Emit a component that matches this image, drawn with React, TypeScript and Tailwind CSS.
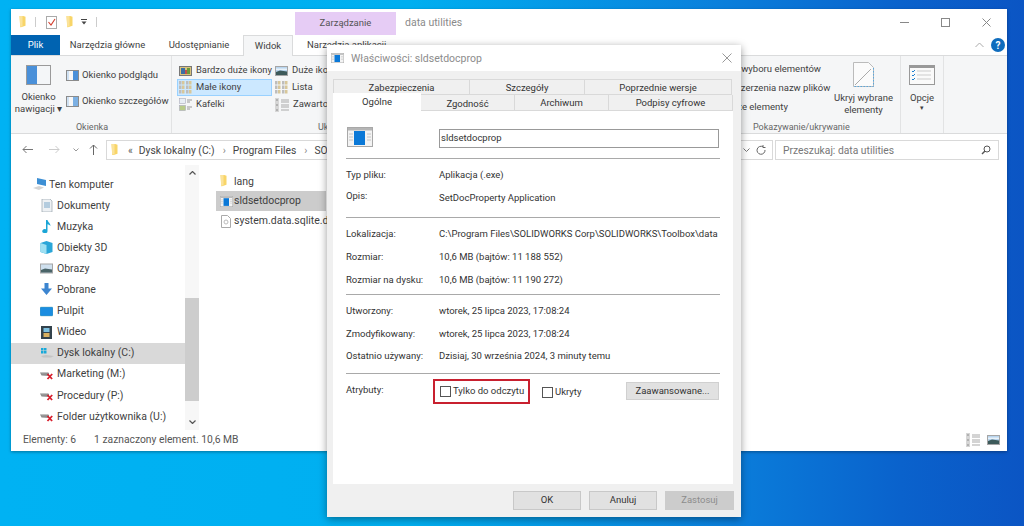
import React from "react";

const Folder = ({ s = 12 }: { s?: number }) => (
  <svg width={s} height={s * 1.25} viewBox="0 0 12 15" className="shrink-0">
    <path d="M2 0h5l3 1v12l-6 2H3z" fill="#f8d568" />
    <path d="M2 0h4v14H3z" fill="#fbe39a" />
  </svg>
);

const AppIcon = ({ w = 16, h = 12 }: { w?: number; h?: number }) => (
  <svg width={w} height={h} viewBox="0 0 26 20" preserveAspectRatio="none" className="shrink-0">
    <rect x="0.5" y="0.5" width="25" height="19" fill="#f3f3f3" stroke="#a8a8a8" />
    <rect x="1" y="1" width="24" height="2.5" fill="#b5b5b5" />
    <rect x="7" y="4" width="11" height="14" fill="#0a78d7" />
    <path d="M2 7h4M2 10h4M2 13h4M20 7h4M20 10h4M20 13h4" stroke="#c4c4c4" />
  </svg>
);

const PaneIcon = ({ fill = "#4a90d9" }: { fill?: string }) => (
  <svg width="13" height="11" viewBox="0 0 13 11" className="shrink-0">
    <rect x="0.5" y="0.5" width="12" height="10" fill="#f7f7f7" stroke="#8b8b8b" />
    <rect x="7" y="1" width="5" height="9" fill={fill} />
    <rect x="1" y="1" width="2" height="9" fill="#cfe1f3" />
  </svg>
);

const GridIcon = () => (
  <svg width="13" height="13" viewBox="0 0 13 13" className="shrink-0">
    {[0, 4.5, 9].map((y) => [0, 7].map((x) => (
      <g key={`${x}-${y}`}>
        <rect x={x} y={y} width="2.5" height="3.5" fill="#bdbdbd" />
        <rect x={x + 3} y={y} width="2.5" height="3.5" fill="#d8c79a" />
      </g>
    )))}
  </svg>
);

const TileIcon = () => (
  <svg width="13" height="13" viewBox="0 0 13 13" className="shrink-0">
    <rect x="0.5" y="0.5" width="6" height="5" fill="#e8eef4" stroke="#aab" strokeWidth=".6" />
    <rect x="0.5" y="7.5" width="6" height="5" fill="#b9cc8a" stroke="#aab" strokeWidth=".6" />
    <path d="M8 2h5M8 4h3M8 9h5M8 11h3" stroke="#999" />
  </svg>
);

const ListIcon = () => (
  <svg width="14" height="14" viewBox="0 0 14 14" className="shrink-0">
    <rect x="0" y="0" width="4" height="14" fill="#d6d6d6" />
    <path d="M1.5 2h1M1.5 7h1M1.5 12h1" stroke="#444" />
    <path d="M6 2h8M6 4h8M6 7h8M6 9h8M6 12h8" stroke="#a9a9a9" />
  </svg>
);

const LandscapeIcon = ({ w = 13, h = 10 }: { w?: number; h?: number }) => (
  <svg width={w} height={h} viewBox="0 0 13 10" className="shrink-0">
    <rect x="0.5" y="0.5" width="12" height="9" fill="#b9d5ee" stroke="#a5a5a5" />
    <path d="M1 6l4-1.5 7 1V9H1z" fill="#3d5a5a" />
    <rect x="1" y="2.5" width="11" height="1.5" fill="#e8f2fa" />
  </svg>
);

const PhotoIcon = () => (
  <svg width="13" height="10" viewBox="0 0 13 10" className="shrink-0">
    <rect x="0.5" y="0.5" width="12" height="9" fill="#d9c27a" stroke="#777" />
    <rect x="2" y="2" width="4" height="6" fill="#3a6ea5" />
    <rect x="6" y="4" width="2" height="4" fill="#c0504d" />
    <rect x="8" y="2" width="3" height="6" fill="#6a9a3a" />
  </svg>
);

const Drive = ({ err = false }: { err?: boolean }) => (
  <svg width="14" height="11" viewBox="0 0 14 11" className="shrink-0">
    {err ? (
      <>
        <path d="M0 3.5l7-.5 2 1v3L1.5 6.5z" fill="#8e8e8e" />
        <path d="M0 3.5l7-.5 2 1-7 .3z" fill="#c9c9c9" />
        <path d="M7.5 5l4.6 5M12.2 5l-4.700 5" stroke="#d81e2c" strokeWidth="1.8" />
      </>
    ) : (
      <>
        <path d="M1 8l5-1 8 1-3 1.5H3z" fill="#c4c4c4" />
        <path d="M1 0h2.5v2.5H1zM4 0h2.5v2.5H4zM1 3h2.5v2.5H1zM4 3h2.5v2.5H4z" fill="#18a9d9" />
      </>
    )}
  </svg>
);

const NavGlyph = ({ kind }: { kind: string }) => {
  const m: Record<string, React.ReactNode> = {
    pc: <><path d="M4 0l9 2v6L4 6z" fill="#3d8fd4" /><path d="M0 10l6-2 5 1.5-5 2.5z" fill="#d4d4d4" /></>,
    doc: <><path d="M2 0h8l2 2v11H2z" fill="#eef1f4" stroke="#9aa5ae" strokeWidth=".7" /><path d="M4 4h6M4 6h6M4 8h6" stroke="#7ba7c9" /></>,
    music: <path d="M6 0h1.5c.5 2.5 3 3 3 6-1-1.2-2-1.6-3-1.8V11a2.6 2 0 1 1-1.5-1.7z" fill="#1aa5d6" />,
    cube: <><path d="M6.5 0l6 2v9l-6 2-6-2V2z" fill="#2aa6d8" /><path d="M.5 2l6 2v9l-6-2z" fill="#9fe0f2" /></>,
    pic: <><rect x="0.5" y="2" width="12" height="9" fill="#cfe0ee" stroke="#a5a5a5" /><path d="M1 8l4-1.5 7 1v3H1z" fill="#4a6468" /></>,
    down: <path d="M4.5 0h4v5.5H12L6.5 12 1 5.5h3.5z" fill="#3c85d0" />,
    desk: <rect x="0" y="2" width="13" height="9" rx="1" fill="#1b8de0" stroke="#6aa" strokeWidth=".4" />,
    video: <><rect x="1" y="0" width="11" height="13" fill="#33424c" /><rect x="3.5" y="2" width="6" height="4" fill="#7dc0e0" /><rect x="3.5" y="7" width="6" height="4" fill="#d9b060" /></>,
  };
  return <svg width="13" height="13" viewBox="0 0 13 13" className="shrink-0">{m[kind]}</svg>;
};

const RibbonItem = ({ icon, label, className = "" }: { icon: React.ReactNode; label: string; className?: string }) => (
  <div className={`flex h-[17px] items-center gap-[4px] whitespace-nowrap pl-[2px] ${className}`}>
    {icon}
    <span>{label}</span>
  </div>
);

const Sep = () => <div className="mx-[13px] h-px shrink-0 bg-[#a9a9a9]" />;

const Row = ({ label, value, h = 23, raise = false }: { label: string; value: string; h?: number; raise?: boolean }) => (
  <div className="flex shrink-0 items-center px-[13px]" style={{ height: h }}>
    <div className={`w-[93px] shrink-0 whitespace-nowrap ${raise ? "-mt-[5px]" : ""}`}>{label}</div>
    <div className="min-w-0 flex-1 whitespace-nowrap">{value}</div>
  </div>
);

const Chk = () => <span className="block h-[11px] w-[11px] shrink-0 border border-[#555] bg-white" />;

const NAV: [string, string][] = [
  ["doc", "Dokumenty"], ["music", "Muzyka"], ["cube", "Obiekty 3D"], ["pic", "Obrazy"],
  ["down", "Pobrane"], ["desk", "Pulpit"], ["video", "Wideo"],
];

export default function App() {
  return (
    <div
      className="relative h-[526px] w-[1024px] overflow-hidden bg-[linear-gradient(90deg,#00b2f3_0%,#00aff0_40%,#0a80dc_70%,#0a62cc_88%,#0b55c4_100%)] text-[#3f3f3f]"
      style={{ fontFamily: "Roboto, sans-serif" }}
    >
      {/* Explorer */}
      <div className="absolute left-[11px] top-[9px] flex h-[442px] w-[996px] flex-col bg-white text-[9.5px] shadow-[0_1px_3px_rgba(0,0,0,0.35)]">
        {/* title row */}
        <div className="flex h-[26px] shrink-0 items-center">
          <div className="flex w-[284px] items-center pl-[7px]">
            <Folder s={9} />
            <div className="ml-[8px] h-[10px] w-px bg-[#ccc]" />
            <svg width="11" height="13" viewBox="0 0 11 13" className="ml-[10px]">
              <rect x=".5" y=".5" width="10" height="12" fill="#fff" stroke="#aaa" />
              <path d="M2.5 6l2.5 3 4-6" fill="none" stroke="#d33c2c" strokeWidth="1.1" />
            </svg>
            <div className="ml-[8px]"><Folder s={9} /></div>
            <svg width="6" height="6" viewBox="0 0 6 6" className="ml-[7px]"><path d="M0 .5h6" stroke="#444" /><path d="M.5 2.5h5L3 5.5z" fill="#444" /></svg>
            <div className="ml-[9px] h-[10px] w-px bg-[#ccc]" />
          </div>
          <div className="mt-[3px] flex h-[23px] w-[101px] items-center justify-center bg-[#e6ccf5] text-[#555]">Zarządzanie</div>
          <div className="ml-[9px] pt-px text-[10.5px] text-[#8a8a8a]">data utilities</div>
          <div className="ml-auto flex items-center gap-[32px] pr-[16px]">
            <span className="block h-px w-[9px] bg-[#888]" />
            <span className="block h-[9px] w-[9px] border border-[#888]" />
            <svg width="9" height="9" viewBox="0 0 9 9"><path d="M.5.5l8 8M8.5.5l-8 8" stroke="#888" /></svg>
          </div>
        </div>
        {/* tabs row */}
        <div className="relative flex h-[20px] shrink-0 items-stretch">
          <div className="flex w-[49px] items-center justify-center bg-[#0063b1] text-white">Plik</div>
          <div className="flex w-[95px] items-center justify-center">Narzędzia główne</div>
          <div className="flex w-[88px] items-center justify-center">Udostępnianie</div>
          <div className="z-10 -mb-px flex w-[50px] items-center justify-center border-x border-t border-[#dadbdc] bg-[#f5f6f7]">Widok</div>
          <div className="flex w-[110px] items-center pl-[14px]">Narzędzia aplikacji</div>
          <div className="ml-auto flex items-center gap-[7px] pr-[2px]">
            <svg width="9" height="6" viewBox="0 0 9 6"><path d="M.5 5l4-4 4 4" fill="none" stroke="#aaa" /></svg>
            <span className="flex h-[14px] w-[14px] items-center justify-center rounded-full bg-[#0f6cbd] text-[10px] font-bold text-white">?</span>
          </div>
        </div>
        {/* ribbon */}
        <div className="flex h-[79px] shrink-0 border-y border-[#dadbdc] bg-[#f5f6f7]">
          <div className="flex w-[161px] shrink-0 flex-col border-r border-[#e2e3e4]">
            <div className="flex flex-1">
              <div className="flex w-[55px] flex-col items-center pt-[9px] text-center leading-[12px]">
                <svg width="25" height="20" viewBox="0 0 25 20">
                  <rect x=".5" y=".5" width="24" height="19" fill="#f4f6f8" stroke="#9a9a9a" />
                  <rect x="1" y="1" width="10" height="18" fill="#4a90d9" />
                </svg>
                <div className="mt-[6px]">Okienko</div>
                <div className="whitespace-nowrap">nawigacji ▾</div>
              </div>
              <div className="flex flex-col gap-[9px] pt-[11px]">
                <RibbonItem icon={<PaneIcon />} label="Okienko podglądu" className="!gap-[3px] !pl-0" />
                <RibbonItem icon={<PaneIcon fill="#7cb0e3" />} label="Okienko szczegółów" className="!gap-[3px] !pl-0" />
              </div>
            </div>
            <div className="-mb-px pl-[2px] text-center text-[9px] text-[#666]">Okienka</div>
          </div>
          <div className="flex w-[520px] shrink-0 flex-col border-r border-[#e2e3e4]">
            <div className="flex flex-1 pt-[6px]">
              <div className="ml-[5px] flex w-[98px] flex-col text-[9.4px]">
                <RibbonItem icon={<PhotoIcon />} label="Bardzo duże ikony" />
                <RibbonItem icon={<GridIcon />} label="Małe ikony" className="mr-[3px] border border-[#99d1ff] bg-[#cce8ff] !pl-[1px]" />
                <RibbonItem icon={<TileIcon />} label="Kafelki" />
              </div>
              <div className="flex flex-col">
                <RibbonItem icon={<LandscapeIcon />} label="Duże ikony" className="!pl-0" />
                <RibbonItem icon={<GridIcon />} label="Lista" className="!pl-0" />
                <RibbonItem icon={<ListIcon />} label="Zawartość" className="!pl-0" />
              </div>
            </div>
            <div className="-mb-px pl-[146px] text-[9px] text-[#666]">Układ</div>
          </div>
          <div className="flex w-[209px] shrink-0 flex-col border-r border-[#e2e3e4]">
            <div className="flex flex-1">
              <div className="ml-[28px] flex w-[112px] flex-col gap-[2px] whitespace-nowrap pt-[6px]">
                <div className="h-[17px]">Pola wyboru elementów</div>
                <div className="h-[17px]">Rozszerzenia nazw plików</div>
                <div className="h-[17px]">Ukryte elementy</div>
              </div>
              <div className="flex w-[63px] flex-col items-center pt-[6px] text-center leading-[12px]">
                <svg width="21" height="25" viewBox="0 0 21 25">
                  <path d="M.5.5h15l5 5v19H.5z" fill="#fbfbfb" stroke="#bbb" />
                  <path d="M20.5 6v18.5H1" fill="none" stroke="#5aa7dc" strokeDasharray="1.5 1.5" />
                  <path d="M2 23L18 7" stroke="#aaa" />
                </svg>
                <div className="mt-[5px] whitespace-nowrap">Ukryj wybrane</div>
                <div>elementy</div>
              </div>
            </div>
            <div className="-mb-px pl-[61px] text-[9px] text-[#666]">Pokazywanie/ukrywanie</div>
          </div>
          <div className="flex w-[43px] shrink-0 flex-col items-center border-r border-[#e2e3e4] pt-[9px]">
            <svg width="26" height="20" viewBox="0 0 26 20">
              <rect x=".5" y=".5" width="25" height="19" fill="#fafafa" stroke="#999" />
              <rect x="1" y="1" width="24" height="2" fill="#999" />
              <path d="M3 6l1 1 2-2M3 10l1 1 2-2M3 14l1 1 2-2" fill="none" stroke="#1d7fd0" />
              <path d="M8 6h14M8 10h14M8 14h14" stroke="#ccc" />
            </svg>
            <div className="mt-[6px]">Opcje</div>
            <div className="mt-[-2px] text-[7px] leading-[10px]">▾</div>
          </div>
        </div>
        {/* address row */}
        <div className="flex h-[31px] shrink-0 items-center">
          <div className="flex w-[95px] items-center pl-[11px] text-[#777]">
            <svg width="11" height="9" viewBox="0 0 11 9"><path d="M11 4.5H1M4.5 1L1 4.5 4.5 8" fill="none" stroke="#777" /></svg>
            <svg width="11" height="9" viewBox="0 0 11 9" className="ml-[16px]"><path d="M0 4.5h10M6.5 1L10 4.5 6.5 8" fill="none" stroke="#ccc" /></svg>
            <svg width="6" height="4" viewBox="0 0 6 4" className="ml-[13px]"><path d="M.5.5L3 3 5.5.5" fill="none" stroke="#999" /></svg>
            <svg width="9" height="11" viewBox="0 0 9 11" className="ml-[10px]"><path d="M4.5 11V1M1 4.5L4.5 1 8 4.5" fill="none" stroke="#666" /></svg>
          </div>
          <div className="flex h-[20px] w-[667px] items-center overflow-hidden border border-[#d9d9d9] pl-[3px] text-[10.3px]">
            <Folder s={9} />
            <span className="ml-[9px] whitespace-nowrap pt-[2px] text-[#555]">«</span>
            <span className="ml-[6px] whitespace-nowrap pt-[2px] text-[#444]">Dysk lokalny (C:)</span>
            <span className="ml-[8px] whitespace-nowrap pt-[2px] text-[#888]">›</span>
            <span className="ml-[7px] whitespace-nowrap pt-[2px] text-[#444]">Program Files</span>
            <span className="ml-[8px] whitespace-nowrap pt-[2px] text-[#888]">›</span>
            <span className="ml-[7px] whitespace-nowrap pt-[2px] text-[#444]">SOLIDWORKS Corp</span>
            <svg width="7" height="4" viewBox="0 0 7 4" className="ml-auto mr-[6px]"><path d="M.5.5l3 3 3-3" fill="none" stroke="#777" /></svg>
            <svg width="10" height="10" viewBox="0 0 10 10" className="mr-[6px]"><path d="M7 1.8A4 4 0 1 0 9 5M7 0v2.5h2.5" fill="none" stroke="#666" /></svg>
          </div>
          <div className="ml-[2px] flex h-[20px] w-[224px] items-center justify-between border border-[#d9d9d9] px-[7px] text-[10.3px] text-[#777]">
            <span className="pt-[2px]">Przeszukaj: data utilities</span>
            <svg width="10" height="10" viewBox="0 0 10 10"><circle cx="6" cy="4" r="3" fill="none" stroke="#555" /><path d="M4 6L1 9" stroke="#555" strokeWidth="1.4" /></svg>
          </div>
        </div>
        {/* main */}
        <div className="flex min-h-0 flex-1">
          <div className="w-[174px] shrink-0 pt-[9px] text-[10.5px]">
            <div className="flex h-[21px] items-center gap-[3px] pl-[22px]">
              <NavGlyph kind="pc" />
              <span>Ten komputer</span>
            </div>
            {NAV.map(([k, l]) => (
              <div key={l} className="flex h-[21.1px] items-center gap-[4px] pl-[29px]">
                <NavGlyph kind={k} />
                <span>{l}</span>
              </div>
            ))}
            <div className="flex h-[21.1px] items-center gap-[3px] bg-[#d9d9d9] pl-[29px]">
              <Drive />
              <span>Dysk lokalny (C:)</span>
            </div>
            {["Marketing (M:)", "Procedury (P:)", "Folder użytkownika (U:)"].map((l) => (
              <div key={l} className="flex h-[21.1px] items-center gap-[3px] pl-[29px]">
                <Drive err />
                <span className="whitespace-nowrap">{l}</span>
              </div>
            ))}
          </div>
          <div className="flex w-[14px] shrink-0 flex-col items-center bg-[#f7f7f7]">
            <svg width="7" height="4" viewBox="0 0 7 4" className="mt-[6px]"><path d="M.5 3.5l3-3 3 3" fill="none" stroke="#555" strokeWidth="1.2" /></svg>
            <div className="mt-[123px] h-[103px] w-full bg-[#cdcdcd]" />
            <svg width="7" height="4" viewBox="0 0 7 4" className="mt-[19px]"><path d="M.5.5l3 3 3-3" fill="none" stroke="#555" strokeWidth="1.2" /></svg>
          </div>
          <div className="min-w-0 flex-1 pl-[17px] pt-[6px] text-[10.5px]">
            <div className="flex h-[20px] items-center gap-[6px] pl-[3px]"><Folder s={9} /><span className="pt-px">lang</span></div>
            <div className="flex h-[20px] w-[110px] items-center gap-px bg-[#cccccc] pl-[4px]"><AppIcon w={13} h={11} /><span>sldsetdocprop</span></div>
            <div className="flex h-[20px] items-center gap-[3px] whitespace-nowrap pl-[5px]">
              <svg width="10" height="13" viewBox="0 0 10 13" className="shrink-0"><path d="M.5.5h6l3 3v9H.5z" fill="#fff" stroke="#aaa" /><circle cx="5" cy="7" r="2" fill="none" stroke="#bbb" /></svg>
              <span>system.data.sqlite.dll</span>
            </div>
          </div>
        </div>
        {/* status */}
        <div className="flex h-[21px] shrink-0 items-center pb-[2px] pl-[12px] pr-[7px] text-[10.3px] text-[#555]">
          <span>Elementy: 6</span>
          <span className="ml-[18px]">1 zaznaczony element. 10,6 MB</span>
          <div className="ml-auto flex items-center gap-[7px]">
            <ListIcon />
            <LandscapeIcon />
          </div>
        </div>
      </div>

      {/* Dialog */}
      <div className="absolute left-[327px] top-[45px] flex h-[472px] w-[414px] flex-col bg-[#f0f0f0] text-[9.5px] text-[#333] shadow-[0_2px_8px_rgba(0,0,0,0.4)]">
        <div className="flex h-[26px] shrink-0 items-center bg-white pl-[4px] pr-[9px]">
          <AppIcon w={13} h={10} />
          <span className="ml-[7px] pt-px text-[10.5px] text-[#8c8c8c]">Właściwości: sldsetdocprop</span>
          <svg width="10" height="10" viewBox="0 0 10 10" className="ml-auto"><path d="M.5.5l9 9M9.5.5l-9 9" stroke="#999" /></svg>
        </div>
        <div className="ml-[6px] mt-[8px] flex h-[16px] w-[399px] shrink-0 text-[#333]">
          <div className="flex w-[137px] items-center justify-center border border-[#d9d9d9] pt-[2px]">Zabezpieczenia</div>
          <div className="flex w-[115px] items-center justify-center border-y border-r border-[#d9d9d9] pt-[2px]">Szczegóły</div>
          <div className="flex flex-1 items-center justify-center border-y border-r border-[#d9d9d9] pt-[2px]">Poprzednie wersje</div>
        </div>
        <div className="relative ml-[6px] flex h-[16px] w-[400px] shrink-0">
          <div className="z-10 -mt-[2px] flex h-[19px] w-[88px] items-center justify-center bg-white">Ogólne</div>
          <div className="flex w-[94px] items-center justify-center border-b border-r border-[#d9d9d9] pt-[3px]">Zgodność</div>
          <div className="flex w-[94px] items-center justify-center border-b border-r border-[#d9d9d9] pt-[2px]">Archiwum</div>
          <div className="flex flex-1 items-center justify-center border-b border-r border-[#d9d9d9] pt-[2px]">Podpisy cyfrowe</div>
        </div>
        <div className="ml-[6px] flex h-[373px] w-[400px] shrink-0 flex-col bg-white">
          <div className="flex h-[47px] shrink-0 items-start px-[14px] pt-[16px]">
            <AppIcon w={26} h={20} />
            <div className="ml-[66px] mt-[2px] flex h-[19px] w-[280px] items-center border border-[#999] pl-[1px]">sldsetdocprop</div>
          </div>
          <Sep />
          <div className="h-[5px] shrink-0" />
          <Row label="Typ pliku:" value="Aplikacja (.exe)" />
          <Row label="Opis:" value="SetDocProperty Application" raise />
          <div className="h-[7px] shrink-0" />
          <Sep />
          <div className="h-[5px] shrink-0" />
          <Row label="Lokalizacja:" value="C:\Program Files\SOLIDWORKS Corp\SOLIDWORKS\Toolbox\data" />
          <Row label="Rozmiar:" value="10,6 MB (bajtów: 11 188 552)" />
          <Row label="Rozmiar na dysku:" value="10,6 MB (bajtów: 11 190 272)" />
          <div className="h-[2px] shrink-0" />
          <Sep />
          <div className="h-[5px] shrink-0" />
          <Row label="Utworzony:" value="wtorek, 25 lipca 2023, 17:08:24" />
          <Row label="Zmodyfikowany:" value="wtorek, 25 lipca 2023, 17:08:24" h={22} />
          <Row label="Ostatnio używany:" value="Dzisiaj, 30 września 2024, 3 minuty temu" />
          <div className="h-[5px] shrink-0" />
          <Sep />
          <div className="flex items-start pl-[13px] pr-[14px] pt-[5px]">
            <div className="mt-[4px] w-[87px] shrink-0">Atrybuty:</div>
            <div className="flex h-[25px] w-[97px] shrink-0 items-center gap-[2px] border-2 border-[#c8202f] pl-[5px]">
              <Chk />
              <span className="whitespace-nowrap">Tylko do odczytu</span>
            </div>
            <div className="ml-[12px] mt-[6px] flex items-center gap-[2px]">
              <Chk />
              <span>Ukryty</span>
            </div>
            <div className="ml-auto mt-[3px] flex h-[18px] w-[93px] items-center justify-center border border-[#d0d0d0] bg-[#e1e1e1]">Zaawansowane...</div>
          </div>
        </div>
        <div className="mt-[7px] flex justify-end gap-[8px] pr-[7px]">
          <div className="flex h-[19px] w-[68px] items-center justify-center border border-[#c8c8c8] bg-[#e1e1e1]">OK</div>
          <div className="flex h-[19px] w-[68px] items-center justify-center border border-[#c8c8c8] bg-[#e1e1e1]">Anuluj</div>
          <div className="flex h-[19px] w-[69px] items-center justify-center bg-[#cccccc] text-[#8c8c8c]">Zastosuj</div>
        </div>
      </div>
    </div>
  );
}
